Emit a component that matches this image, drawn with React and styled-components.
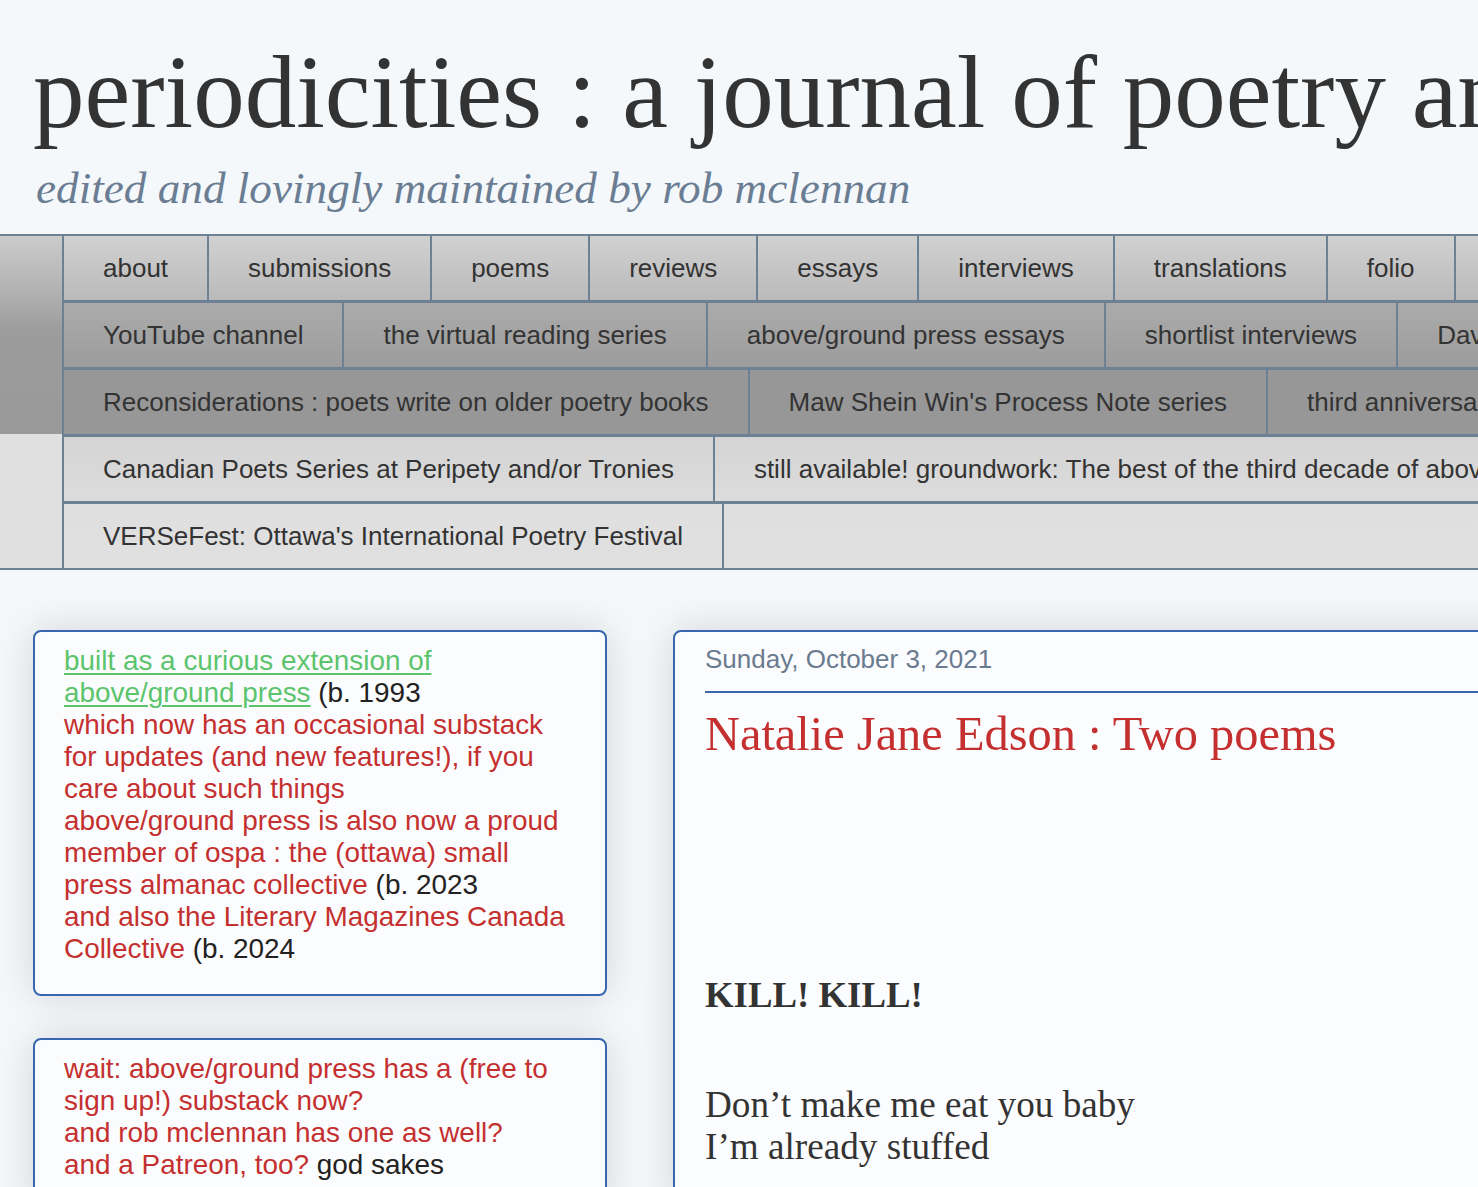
import React from 'react';
import styled, { createGlobalStyle } from 'styled-components';

const GlobalStyle = createGlobalStyle`
  html, body {
    margin: 0;
    padding: 0;
    background: #f4f8fb;
    overflow: hidden;
  }
  body {
    font-family: "Liberation Sans", Arial, sans-serif;
  }
`;

const BORDER = '#6d8094';
const BLUE = '#3a66b0';
const RED = '#c4302f';

const Page = styled.div`
  width: 100%;
  min-height: 1187px;
  overflow: hidden;
  background: #f4f8fb;
`;

const Header = styled.header`
  padding: 41px 0 23px 33px;
  white-space: nowrap;
`;

const SiteTitle = styled.h1`
  margin: 0;
  font-family: "Liberation Serif", "Times New Roman", serif;
  font-weight: normal;
  font-size: 103px;
  line-height: 102px;
  color: #333;
`;

const Tagline = styled.div`
  margin-top: 23px;
  padding-left: 3px;
  font-family: "Liberation Serif", "Times New Roman", serif;
  font-style: italic;
  font-size: 45.2px;
  line-height: 45px;
  color: #6b7d93;
`;

const Nav = styled.nav`
  border-top: 2px solid ${BORDER};
  border-bottom: 2px solid ${BORDER};
  padding-left: 62px;
  white-space: nowrap;
  background: linear-gradient(
    180deg,
    #cbcbcb 0px,
    #b2b2b2 55px,
    #9c9c9c 95px,
    #999999 198px,
    #e0e0e0 198px,
    #e0e0e0 100%
  );
`;

const TabList = styled.div`
  display: flex;
  flex-direction: column;
  background: linear-gradient(
    180deg,
    #d1d1d1 0px,
    #bababa 64px,
    #ababab 67px,
    #9c9c9c 131px,
    #979797 134px,
    #979797 198px,
    #d4d4d4 201px,
    #dcdcdc 265px,
    #dfdfdf 268px,
    #e0e0e0 100%
  );
`;

const TabRow = styled.div`
  display: flex;
  & + & {
    border-top: 3px solid ${BORDER};
  }
`;

const Tab = styled.a`
  flex: none;
  display: block;
  padding: 17px 39px;
  font-family: "Liberation Sans", Arial, sans-serif;
  font-size: 26px;
  line-height: 30px;
  color: #333;
  text-decoration: none;
  border-left: 2px solid ${BORDER};
  &:last-child {
    border-right: 2px solid ${BORDER};
  }
`;

const Content = styled.div`
  display: flex;
  align-items: flex-start;
  gap: 66px;
  padding: 60px 0 0 33px;
`;

const Sidebar = styled.aside`
  flex: none;
  width: 574px;
  display: flex;
  flex-direction: column;
  gap: 42px;
`;

const Card = styled.div`
  box-sizing: border-box;
  border: 2px solid ${BLUE};
  border-radius: 8px;
  background: #fbfcfe;
  box-shadow: 0 0 40px rgba(0, 0, 0, 0.14);
`;

const WidgetCard = styled(Card)`
  padding: 13px 29px 29px;
  font-family: "Liberation Sans", Arial, sans-serif;
  font-size: 27.9px;
  line-height: 32px;
  color: #222;
`;

const GreenLink = styled.a`
  color: #5bc46d;
  text-decoration: underline;
  text-decoration-thickness: 2px;
  text-underline-offset: 3px;
`;

const Red = styled.span`
  color: ${RED};
`;

const PostCard = styled(Card)`
  flex: none;
  width: 1000px;
  padding: 12px 30px 40px;
`;

const DateHeader = styled.h2`
  margin: 0;
  padding-bottom: 17px;
  border-bottom: 2px solid ${BLUE};
  font-family: "Liberation Sans", Arial, sans-serif;
  font-weight: normal;
  font-size: 26px;
  line-height: 30px;
  color: #6b7b8f;
`;

const PostTitle = styled.h3`
  margin: 13px 0 0;
  font-family: "Liberation Serif", "Times New Roman", serif;
  font-weight: normal;
  font-size: 48.4px;
  line-height: 56px;
  color: ${RED};
`;

const PostBody = styled.div`
  margin-top: 212px;
  font-family: "Liberation Serif", "Times New Roman", serif;
  color: #333;
`;

const PoemTitle = styled.div`
  font-weight: bold;
  font-size: 36.8px;
  line-height: 42px;
`;

const Stanza = styled.div`
  margin-top: 68px;
  font-size: 37.2px;
  line-height: 42px;
`;

const rows = [
  ['about', 'submissions', 'poems', 'reviews', 'essays', 'interviews', 'translations', 'folio', 'substack'],
  ['YouTube channel', 'the virtual reading series', 'above/ground press essays', 'shortlist interviews', 'David W. McFadden'],
  ['Reconsiderations : poets write on older poetry books', "Maw Shein Win's Process Note series", 'third anniversary issue'],
  ['Canadian Poets Series at Peripety and/or Tronies', 'still available! groundwork: The best of the third decade of above/ground press 2013-2023'],
  ["VERSeFest: Ottawa's International Poetry Festival"],
];

export default function App() {
  return (
    <Page>
      <GlobalStyle />
      <Header>
        <SiteTitle>periodicities : a journal of poetry and poetics</SiteTitle>
        <Tagline>edited and lovingly maintained by rob mclennan</Tagline>
      </Header>
      <Nav>
        <TabList>
          {rows.map((row, i) => (
            <TabRow key={i}>
              {row.map((label) => (
                <Tab key={label} href="#">{label}</Tab>
              ))}
            </TabRow>
          ))}
        </TabList>
      </Nav>
      <Content>
        <Sidebar>
          <WidgetCard>
            <GreenLink href="#">built as a curious extension of above/ground press</GreenLink> (b. 1993
            <br />
            <Red>which now has an occasional substack for updates (and new features!), if you care about such things</Red>
            <br />
            <Red>above/ground press is also now a proud member of ospa : the (ottawa) small press almanac collective</Red> (b. 2023
            <br />
            <Red>and also the Literary Magazines Canada Collective</Red> (b. 2024
          </WidgetCard>
          <WidgetCard>
            <Red>wait: above/ground press has a (free to sign up!) substack now?</Red>
            <br />
            <Red>and rob mclennan has one as well?</Red>
            <br />
            <Red>and a Patreon, too?</Red> god sakes
          </WidgetCard>
        </Sidebar>
        <PostCard>
          <DateHeader>Sunday, October 3, 2021</DateHeader>
          <PostTitle>Natalie Jane Edson : Two poems</PostTitle>
          <PostBody>
            <PoemTitle>KILL! KILL!</PoemTitle>
            <Stanza>
              Don’t make me eat you baby
              <br />
              I’m already stuffed
            </Stanza>
          </PostBody>
        </PostCard>
      </Content>
    </Page>
  );
}
